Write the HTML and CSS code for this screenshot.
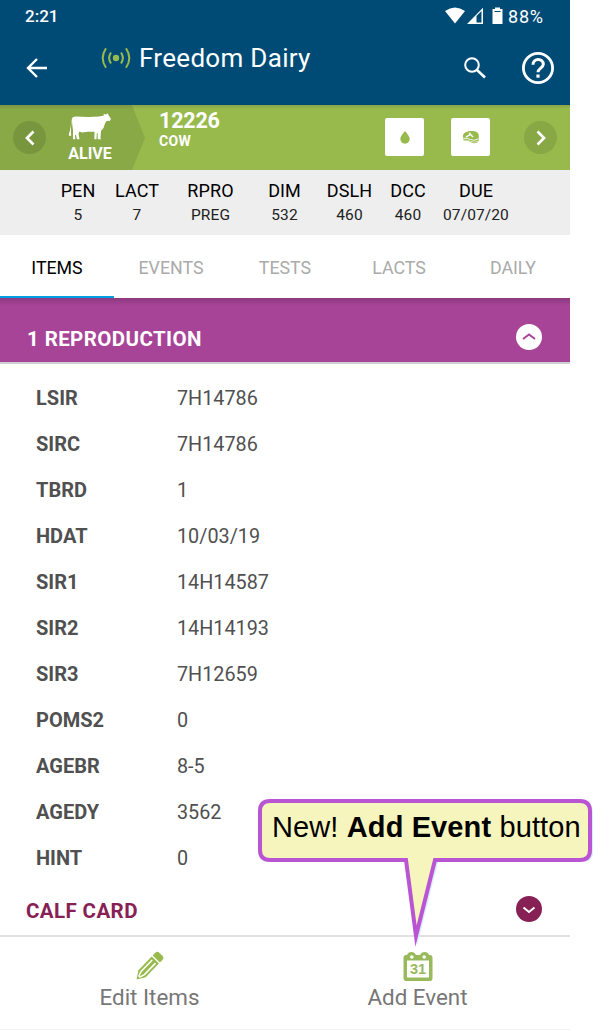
FILE: index.html
```html
<!DOCTYPE html>
<html lang="en">
<head>
    <meta charset="UTF-8">
    <meta name="viewport" content="width=device-width, initial-scale=1.0">
    <title>Freedom Dairy</title>
    <link rel="stylesheet" href="styles.css">
</head>
<body>
    <div class="phone">
        <header class="topbar">
            <div class="status">
                <span class="time">2:21</span>
                <svg class="status-icons" width="60" height="20" viewBox="0 0 60 20">
                    <path d="M0 4 Q10 -3 20 4 L10 16.500Z" fill="#fff"/>
                    <path d="M22 17 L38 .8 V17Z" fill="#fff"/>
                    <path d="M31.500 9 L36.500 4 V15.500 H31.500Z" fill="#004b75"/>
                    <path d="M50 2 V.5 H55 V2 H57.500 V17 H47.500 V2Z" fill="#fff"/>
                    <path d="M49.500 4.500 H55.500" stroke="#004b75" stroke-width="1"/>
                </svg>
                <span class="battery">88%</span>
            </div>
            <div class="titlebar">
                <svg class="back" width="22" height="20" viewBox="0 0 22 20" fill="none" stroke="#fff" stroke-width="2.400">
                    <path d="M21 10 H2 M11 1 L2 10 L11 19"/>
                </svg>
                <svg class="signal" width="30" height="22" viewBox="0 0 30 22" fill="none" stroke="#98ba4d" stroke-width="2">
                    <circle cx="15" cy="11" r="3.200" fill="#98ba4d" stroke="none"/>
                    <path d="M10 5.500 Q6.200 11 10 16.500 M20 5.500 Q23.800 11 20 16.500 M5 1.200 Q-1.600 11 5 20.800 M25 1.200 Q31.600 11 25 20.800"/>
                </svg>
                <h1>Freedom Dairy</h1>
                <svg class="search" width="22" height="22" viewBox="0 0 22 22" fill="none" stroke="#fff" stroke-width="2">
                    <circle cx="8" cy="8" r="6.800"/>
                    <path d="M13 13 L21 20.500" stroke-width="2.600"/>
                </svg>
                <svg class="help" width="34" height="34" viewBox="0 0 34 34" fill="none" stroke="#fff">
                    <circle cx="17" cy="17" r="14.600" stroke-width="2.800"/>
                    <path d="M12 13.800 C12 6.800 22.300 6.800 22.300 13.300 C22.300 17 17 17.200 17 21.300" stroke-width="3"/>
                    <path d="M17 23.500 V26.700" stroke-width="3.200"/>
                </svg>
            </div>
        </header>

        <section class="animal">
            <div class="alive">
                <span class="round"><svg width="12" height="18" viewBox="0 0 12 18"><path d="M9.500 2.500 L3 9 L9.500 15.500"/></svg></span>
                <div class="alive-state">
                    <svg width="44" height="28" viewBox="0 0 44 28" fill="#fff">
                        <path d="M4 5.500 Q4.500 3.800 8 3.600 L20 4 L31 3.600 L36 2.500 L35.500 .8 L38 1.500 L39.500 .3 L40.500 2 L43 6 L42 7.800 L38.500 8 L37 10.500 L35.500 15 L33 18 L32.500 25 L33 26.300 H29.800 L29.500 20 L28.800 20 L28.500 26.300 H26.300 L26.500 18.800 L20 18.800 L14 19.500 L11.500 18.500 L10.500 20.500 L11.500 26.300 H9 L7.800 21.500 L7 22.500 L7.300 26.300 H5 L5 17.500 L4.300 12 L4 8 L3 13 L3 19 L3.200 22.500 L1.300 23.300 L.8 21 L2 17.500Z"/>
                    </svg>
                    <span>ALIVE</span>
                </div>
            </div>
            <div class="animal-id">
                <strong>12226</strong>
                <span>COW</span>
            </div>
            <div class="tile">
                <svg width="12" height="15" viewBox="0 0 12 15"><path d="M6 1 Q10.700 6.500 10.700 9 A4.700 4.700 0 0 1 1.300 9 Q1.300 6.500 6 1Z" fill="#98ba4d"/></svg>
            </div>
            <div class="tile">
                <svg width="18" height="15" viewBox="0 0 18 15">
                    <path d="M1 6 C1 0 16.800 -1 16.800 5.500 L16.800 10 Q15.500 13.700 12 13.200 Q10 13 8 11.700 Q5.500 10.500 2 11 L1 9Z" fill="#98ba4d"/>
                    <path d="M4 6.800 L8.500 4.500 L7.200 2.800 M8.500 4.500 L11 7" fill="none" stroke="#fff" stroke-width="1.400"/>
                    <path d="M1 8.300 Q5 7.500 8.500 9.500 T16.500 8.800" fill="none" stroke="#fff" stroke-width=".9"/>
                    <path d="M1 10.300 Q5 9.500 8.500 11.300 T16 11.300" fill="none" stroke="#fff" stroke-width=".6"/>
                </svg>
            </div>
            <span class="round round-next"><svg width="12" height="18" viewBox="0 0 12 18"><path d="M2.500 2.500 L9 9 L2.500 15.500"/></svg></span>
        </section>

        <section class="stats">
            <div><b>PEN</b><span>5</span></div>
            <div><b>LACT</b><span>7</span></div>
            <div><b>RPRO</b><span>PREG</span></div>
            <div><b>DIM</b><span>532</span></div>
            <div><b>DSLH</b><span>460</span></div>
            <div><b>DCC</b><span>460</span></div>
            <div><b>DUE</b><span>07/07/20</span></div>
        </section>

        <nav class="tabs">
            <a class="active">ITEMS</a>
            <a>EVENTS</a>
            <a>TESTS</a>
            <a>LACTS</a>
            <a>DAILY</a>
        </nav>

        <div class="section-header">
            <h2>1 REPRODUCTION</h2>
            <svg width="26" height="26" viewBox="0 0 26 26"><circle cx="13" cy="13" r="13" fill="#fff"/><path d="M7 15 L13 10.500 L19 15" fill="none" stroke="#a84497" stroke-width="2"/></svg>
        </div>

        <dl class="items">
            <dt>LSIR</dt><dd>7H14786</dd>
            <dt>SIRC</dt><dd>7H14786</dd>
            <dt>TBRD</dt><dd>1</dd>
            <dt>HDAT</dt><dd>10/03/19</dd>
            <dt>SIR1</dt><dd>14H14587</dd>
            <dt>SIR2</dt><dd>14H14193</dd>
            <dt>SIR3</dt><dd>7H12659</dd>
            <dt>POMS2</dt><dd>0</dd>
            <dt>AGEBR</dt><dd>8-5</dd>
            <dt>AGEDY</dt><dd>3562</dd>
            <dt>HINT</dt><dd>0</dd>
        </dl>

        <div class="calf-card">
            <h2>CALF CARD</h2>
            <svg width="26" height="26" viewBox="0 0 26 26"><circle cx="13" cy="13" r="13" fill="#872055"/><path d="M7.500 11.500 L13 16 L18.500 11.500" fill="none" stroke="#fff" stroke-width="2"/></svg>
        </div>

        <footer class="actions">
            <div class="action action-edit">
                <svg width="28" height="30" viewBox="0 0 28 30">
                    <g transform="translate(.5 28.5) rotate(-46)" fill="#98ba4d">
                        <path d="M0 0 L8 -5 H27 V5 H8Z"/>
                        <path d="M28.500 -5 H32 Q35 -5 35 -2.500 V2.500 Q35 5 32 5 H28.500Z"/>
                        <path d="M3.500 -.5 L9 -2.300 H25 M3.500 .5 L9 2.300 H25" fill="none" stroke="#fff" stroke-width="1.500"/>
                    </g>
                </svg>
                <span>Edit Items</span>
            </div>
            <div class="action action-add">
                <svg width="30" height="30" viewBox="0 0 30 30">
                    <path d="M3 4 H4 Q5 1 8.500 1 Q11.500 1 13 4 H17 Q18.500 1 21.500 1 Q25 1 26 4 H27 Q29.500 4 29.500 7 V27 Q29.500 30 27 30 H3 Q.5 30 .5 27 V7 Q.5 4 3 4Z" fill="#98ba5c"/>
                    <rect x="4" y="9.500" width="22" height="17" fill="#fff"/>
                    <circle cx="8.800" cy="6" r="1.800" fill="#fff"/>
                    <circle cx="21.200" cy="6" r="1.800" fill="#fff"/>
                    <text x="15" y="23" text-anchor="middle" class="cal-day">31</text>
                </svg>
                <span>Add Event</span>
            </div>
        </footer>
    </div>

    <div class="callout">
        <svg width="346" height="160" viewBox="0 0 346 160">
            <path class="callout-shadow" d="M12 3 H324 Q334 3 334 13 V52 Q334 62 324 62 H179 L158 146 L149 62 H12 Q2 62 2 52 V13 Q2 3 12 3Z" transform="translate(1 2)"/>
            <path class="callout-shape" d="M12 3 H322 Q332 3 332 13 V52 Q332 62 322 62 H177 L158 138 L148 62 H12 Q2 62 2 52 V13 Q2 3 12 3Z"/>
        </svg>
        <p>New! <b>Add Event</b> button</p>
    </div>
</body>
</html>
```

FILE: styles.css
```css
* {
    box-sizing: border-box;
}

body {
    margin: 0;
    height: 1030px;
    position: relative;
    overflow: hidden;
    background-color: #fff;
    font-family: Roboto, sans-serif;
}

h1, h2, p, dl, dd {
    margin: 0;
}

svg {
    display: block;
    flex: none;
}

.phone {
    width: 570px;
    height: 1030px;
}

/* Top bar */
.topbar {
    height: 105px;
    background-color: #004b75;
    color: #fff;
}

.status {
    display: flex;
    align-items: center;
    height: 32px;
    padding-left: 25px;
}

.time {
    width: 420px;
    margin-top: -1px;
    font-size: 17px;
    font-weight: 500;
}

.status-icons {
    margin-top: 1px;
}

.battery {
    margin-left: 3px;
    font-size: 18px;
    font-weight: 400;
    letter-spacing: 0.8px;
}

.titlebar {
    display: flex;
    align-items: center;
    height: 72px;
    padding-left: 26px;
}

.signal {
    margin: -21px 8px 0 53px;
}

h1 {
    width: 325px;
    margin-top: -20px;
    font-size: 26px;
    font-weight: 400;
    letter-spacing: 0.3px;
}

.help {
    margin-left: 35px;
}

/* Animal band */
.animal {
    display: flex;
    align-items: center;
    height: 65px;
    background: linear-gradient(#88a54a, #98ba4d 4px);
    color: #fff;
}

.alive {
    display: flex;
    align-items: center;
    width: 145px;
    height: 65px;
    padding-left: 13px;
    background: linear-gradient(#7b9643, #89a846 4px);
    clip-path: polygon(0 0, 132px 0, 100% 33px, 132px 100%, 0 100%);
}

.round {
    display: flex;
    align-items: center;
    justify-content: center;
    width: 33px;
    height: 33px;
    border-radius: 50%;
    background-color: #78963d;
}

.round path {
    fill: none;
    stroke: #fff;
    stroke-width: 2.7;
}

.round-next {
    margin-left: 34px;
    background-color: #88a745;
}

.alive-state {
    display: flex;
    flex-direction: column;
    align-items: center;
    width: 44px;
    margin-left: 22px;
    padding-top: 1px;
    font-size: 16px;
    font-weight: 700;
    line-height: 20px;
}

.alive-state svg {
    margin-bottom: 3px;
}

.animal-id {
    width: 226px;
    height: 65px;
    padding: 4px 0 0 14px;
}

.animal-id strong {
    display: block;
    font-size: 21.5px;
    line-height: 24px;
    letter-spacing: -0.2px;
}

.animal-id span {
    display: block;
    font-size: 14px;
    font-weight: 700;
    line-height: 16px;
    letter-spacing: 0.4px;
}

.tile {
    display: flex;
    align-items: center;
    justify-content: center;
    width: 39px;
    height: 38px;
    margin: -1px 0 0 14px;
    border-radius: 2px;
    background-color: #fff;
}

.tile + .tile {
    margin-left: 27px;
}

/* Stats */
.stats {
    display: grid;
    grid-template-columns: 46px 72px 75px 73px 57px 60px 76px;
    height: 65px;
    padding: 10px 0 0 55px;
    background-color: #eee;
    text-align: center;
}

.stats b {
    display: block;
    font-size: 18px;
    font-weight: 400;
    line-height: 21px;
    letter-spacing: 0.1px;
    color: #000;
}

.stats span {
    display: block;
    margin-top: 5px;
    font-size: 15.5px;
    line-height: 18px;
    letter-spacing: 0.1px;
    color: #222;
}

/* Tabs */
.tabs {
    display: grid;
    grid-template-columns: repeat(5, 114px);
    height: 63px;
}

.tabs a {
    height: 63px;
    padding-top: 2px;
    font-size: 17.8px;
    line-height: 62px;
    text-align: center;
    color: #aaa;
}

.tabs .active {
    border-bottom: 2px solid #009fe3;
    color: #000;
}

/* Items */
.section-header {
    display: flex;
    align-items: center;
    justify-content: space-between;
    height: 66px;
    padding: 14px 28px 0 27px;
    background: linear-gradient(#8c3a80, #a84497 8px);
    border-bottom: 2px solid #d0d0d0;
    color: #fff;
}

h2 {
    margin-top: 3px;
    font-size: 20.5px;
    font-weight: 700;
    letter-spacing: 0.4px;
}

.items {
    display: grid;
    grid-template-columns: 141px 1fr;
    padding: 11px 0 0 36px;
    font-size: 20px;
    line-height: 46px;
    color: #505050;
}

.items dt {
    height: 46px;
    font-weight: 700;
}

.items dd {
    height: 46px;
    padding-top: 1px;
    font-size: 19.8px;
}

.calf-card {
    display: flex;
    align-items: center;
    justify-content: space-between;
    height: 54px;
    padding: 1px 28px 0 26px;
    color: #872055;
}

.calf-card h2 {
    margin-top: 5px;
}

/* Bottom actions */
.actions {
    display: flex;
    height: 95px;
    border-top: 2px solid #e1e1e1;
    border-bottom: 1px solid #f1f1f1;
    color: #777;
}

.action {
    display: flex;
    flex-direction: column;
    align-items: center;
    width: 299px;
    padding-top: 14px;
    font-size: 22.4px;
    line-height: 32px;
}

.action-add {
    width: 237px;
}

.cal-day {
    font-family: "Liberation Sans", sans-serif;
    font-size: 14.5px;
    font-weight: 700;
    fill: #98ba5c;
}

/* Callout */
.callout {
    position: absolute;
    left: 258px;
    top: 798px;
}

.callout-shape {
    fill: #f7f5be;
    stroke: #b955d3;
    stroke-width: 4;
    stroke-miterlimit: 12;
}

.callout-shadow {
    fill: #d9edfc;
}

.callout p {
    position: absolute;
    left: 14px;
    top: 12px;
    font-family: "Liberation Sans", Arial, sans-serif;
    font-size: 29px;
    line-height: 34px;
    letter-spacing: 0.12px;
    white-space: nowrap;
    color: #000;
}
```
